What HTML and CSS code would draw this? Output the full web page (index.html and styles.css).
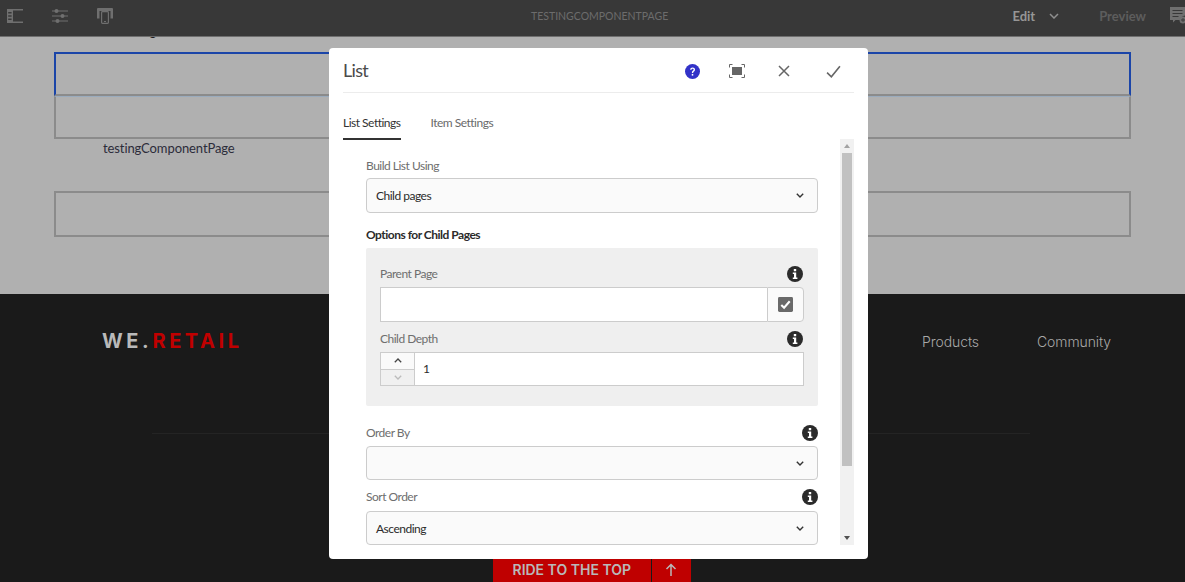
FILE: index.html
```html
<!DOCTYPE html>
<html lang="en">
<head>
  <meta charset="UTF-8" />
  <title>TESTINGCOMPONENTPAGE</title>
  <link rel="stylesheet" href="styles.css">
</head>
<body>
  <header class="topbar">
    <div class="topbar-tools">
      <svg class="tool" viewBox="0 0 16 14"><path d="M0 0h16v1.4H6V12.6h10V14H0z M1.2 3v1.4h3.4V3z M1.2 6.3v1.4h3.4V6.3z M1.2 9.600v1.400h3.400V9.600z" fill="#6f6f6f" fill-rule="evenodd"/></svg>
      <svg class="tool" viewBox="0 0 16 14"><g fill="#6f6f6f"><path d="M0 1.500h16v1H0zM0 6.500h16v1H0zM0 11.500h16v1H0z"/><circle cx="4.500" cy="2" r="2"/><circle cx="10.500" cy="7" r="2"/><circle cx="5.500" cy="12" r="2"/></g></svg>
      <svg class="tool" viewBox="0 0 16 16"><path d="M1 0h14a1 1 0 0 1 1 1v9.500h-2.500V3h-11v7.500H0V1a1 1 0 0 1 1-1z" fill="#6f6f6f"/><rect x="4.600" y="3.600" width="6.800" height="11.800" rx=".8" fill="none" stroke="#6f6f6f" stroke-width="1.200"/><path d="M7 13h2v1H7z" fill="#6f6f6f"/></svg>
    </div>
    <div class="topbar-title">TESTINGCOMPONENTPAGE</div>
    <div class="topbar-actions">
      <span class="mode">Edit</span>
      <svg class="mode-arrow" viewBox="0 0 10 6"><path d="M1 1l4 4 4-4" fill="none" stroke="#8f8f8f" stroke-width="1.500"/></svg>
      <span class="preview">Preview</span>
      <svg class="annotate" viewBox="0 0 16 17"><path d="M0 0h15v8.500a4.500 4.500 0 0 0-4 4.500H5.500L3 15.500V13H0z" fill="#6f6f6f"/><path d="M2.500 3h10v1h-10zM2.500 6h10v1h-10zM2.500 9h6v1h-6z" fill="#383838"/><circle cx="13" cy="13" r="3.500" fill="#6f6f6f"/><path d="M11 12.600h4v.8h-4zM12.600 11h.8v4h-.8z" fill="#383838"/></svg>
    </div>
  </header>

  <main class="page">
    <div class="page-heading">testing</div>
    <div class="parsys parsys-active"></div>
    <div class="parsys parsys-next"></div>
    <p class="page-link">testingComponentPage</p>
    <div class="parsys parsys-last"></div>
  </main>

  <footer class="footer">
    <div class="footer-nav">
      <div class="logo">WE.<span class="logo-red">RETAIL</span></div>
      <nav class="footer-links">
        <a>Products</a>
        <a>Community</a>
      </nav>
    </div>
    <div class="footer-rule"></div>
    <div class="ride">
      <span class="ride-label">RIDE TO THE TOP</span>
      <span class="ride-arrow">
        <svg viewBox="0 0 12 14" width="12" height="14"><path d="M6 13V1.500M1.500 6L6 1.500 10.500 6" fill="none" stroke="#b9b9b9" stroke-width="1.500"/></svg>
      </span>
    </div>
  </footer>

  <section class="dialog">
    <div class="dialog-head">
      <h2 class="dialog-title">List</h2>
      <div class="dialog-actions">
        <svg class="act act-help" viewBox="0 0 16 16"><circle cx="8" cy="8" r="8" fill="#3232c8"/><path d="M5.500 6.200c0-3.300 5.200-3.300 5.200-.2 0 1.800-2 1.800-2 3.500H7.300c0-2.400 1.900-2.400 1.900-3.400 0-1.300-2.200-1.200-2.200.1z" fill="#fff"/><rect x="7.200" y="10.600" width="1.600" height="1.800" fill="#fff"/></svg>
        <svg class="act" viewBox="0 0 16 14"><path d="M.5 3.500V.5h3M12.500.5h3v3M15.500 10.500v3h-3M3.500 13.500h-3v-3" fill="none" stroke="#666" stroke-width="1"/><rect x="3" y="3" width="10" height="8" fill="#666"/></svg>
        <svg class="act act-close" viewBox="0 0 14 14"><path d="M2 2l10 10M12 2L2 12" fill="none" stroke="#666" stroke-width="1.500"/></svg>
        <svg class="act act-small" viewBox="0 0 14 14"><path d="M1 8l4 4 8-10" fill="none" stroke="#666" stroke-width="1.500"/></svg>
      </div>
    </div>

    <div class="tabs">
      <span class="tab tab-on">List Settings</span>
      <span class="tab">Item Settings</span>
    </div>

    <div class="dialog-body">
      <form class="form">
        <div class="label-row"><label>Build List Using</label></div>
        <div class="select">Child pages<svg class="chev" viewBox="0 0 8 5"><path d="M.8.800L4 4 7.200.800" fill="none" stroke="#333" stroke-width="1.400"/></svg></div>

        <div class="group-title">Options for Child Pages</div>
        <div class="panel">
          <div class="label-row label-row-first">
            <label>Parent Page</label>
            <svg class="info" viewBox="0 0 16 16"><circle cx="8" cy="8" r="8" fill="#2b2b2b"/><path d="M6.800 3h2.400v2.200H6.800zM5.800 6.500h3.400v5h1.200V13H5.800v-1.500h1.200V8H5.800z" fill="#fff"/></svg>
          </div>
          <div class="pathfield">
            <div class="pathfield-input"></div>
            <div class="pathfield-btn">
              <svg viewBox="0 0 16 16" width="15" height="15"><rect width="16" height="16" rx="1.500" fill="#6a6a6a"/><path d="M3.500 8.500l3 3 6-7" fill="none" stroke="#fff" stroke-width="2.200"/></svg>
            </div>
          </div>
          <div class="label-row label-row-next">
            <label>Child Depth</label>
            <svg class="info" viewBox="0 0 16 16"><circle cx="8" cy="8" r="8" fill="#2b2b2b"/><path d="M6.800 3h2.400v2.200H6.800zM5.800 6.500h3.400v5h1.200V13H5.800v-1.500h1.200V8H5.800z" fill="#fff"/></svg>
          </div>
          <div class="number">
            <div class="stepper">
              <span class="step"><svg viewBox="0 0 8 5" width="8" height="5"><path d="M.8 4.200L4 1l3.200 3.200" fill="none" stroke="#444" stroke-width="1.300"/></svg></span>
              <span class="step step-off"><svg viewBox="0 0 8 5" width="8" height="5"><path d="M.8.800L4 4 7.200.800" fill="none" stroke="#bbb" stroke-width="1.300"/></svg></span>
            </div>
            <div class="number-value">1</div>
          </div>
        </div>

        <div class="label-row label-row-order">
          <label>Order By</label>
          <svg class="info" viewBox="0 0 16 16"><circle cx="8" cy="8" r="8" fill="#2b2b2b"/><path d="M6.800 3h2.400v2.200H6.800zM5.800 6.500h3.400v5h1.200V13H5.800v-1.500h1.200V8H5.800z" fill="#fff"/></svg>
        </div>
        <div class="select select-short"><svg class="chev" viewBox="0 0 8 5"><path d="M.8.800L4 4 7.200.800" fill="none" stroke="#333" stroke-width="1.400"/></svg></div>
        <div class="label-row label-row-next label-row-sort">
          <label>Sort Order</label>
          <svg class="info" viewBox="0 0 16 16"><circle cx="8" cy="8" r="8" fill="#2b2b2b"/><path d="M6.800 3h2.400v2.200H6.800zM5.800 6.500h3.400v5h1.200V13H5.800v-1.500h1.200V8H5.800z" fill="#fff"/></svg>
        </div>
        <div class="select select-short">Ascending<svg class="chev" viewBox="0 0 8 5"><path d="M.8.800L4 4 7.200.800" fill="none" stroke="#333" stroke-width="1.400"/></svg></div>
      </form>

      <div class="scrollbar">
        <span class="scroll-up"></span>
        <div class="scroll-track"><div class="scroll-thumb"></div></div>
        <span class="scroll-down"></span>
      </div>
    </div>
  </section>
</body>
</html>
```

FILE: styles.css
```css
html,
body {
  height: 100%;
}
body {
  margin: 0;
  height: 582px;
  overflow: hidden;
  background: #b0b0b0;
  font-family: "Lato", "Liberation Sans", sans-serif;
  color: #2b2b2b;
}

/* top bar */
.topbar {
  position: relative;
  z-index: 2;
  display: flex;
  align-items: center;
  height: 36px;
  box-sizing: content-box;
  background: #383838;
  border-bottom: 1px solid #6f6f6f;
}
.topbar-tools {
  display: flex;
  align-items: center;
  gap: 29px;
  padding: 0 0 5px 7px;
  width: 531px;
  box-sizing: border-box;
}
.tool {
  width: 16px;
  height: 16px;
}
.topbar-title {
  flex: 1;
  padding-bottom: 5px;
  font-size: 10.5px;
  color: #6c6c6c;
}
.topbar-actions {
  display: flex;
  align-items: center;
  padding-bottom: 5px;
  margin-right: -1px;
}
.mode {
  font-size: 13px;
  font-weight: 700;
  color: #969696;
}
.mode-arrow {
  width: 10px;
  height: 6px;
  margin-left: 14px;
}
.preview {
  margin-left: 40px;
  font-size: 13px;
  font-weight: 700;
  color: #5d5d5d;
}
.annotate {
  width: 16px;
  height: 17px;
  margin-left: 24px;
}

/* page under the dialog */
.page {
  height: 257px;
  box-sizing: border-box;
  padding: 15px 54px 0;
}
.page-heading {
  height: 0;
  margin: -30px 0 30px 63px;
  font-size: 13px;
  line-height: 18px;
  color: #1c1c1c;
}
.parsys {
  border: 2px solid #8b8b8b;
  box-sizing: border-box;
}
.parsys-active {
  height: 44px;
  border-color: #1b45a8;
  border-bottom-color: #8b8b8b;
}
.parsys-next {
  height: 43px;
  border-top-color: #9aabbd;
  border-top-width: 1px;
}
.page-link {
  margin: 1px 0 0 49px;
  height: 51px;
  font-size: 13px;
  line-height: 16px;
  letter-spacing: -0.1px;
  color: #2c2c3a;
}
.parsys-last {
  height: 46px;
}

/* footer */
.footer {
  display: flex;
  flex-direction: column;
  height: 288px;
  background: #1a1a1a;
}
.footer-nav {
  display: flex;
  justify-content: space-between;
  align-items: center;
  height: 30px;
  margin-top: 32px;
  padding: 0 74px 0 102px;
}
.logo {
  font-family: "Inter", "Liberation Sans", sans-serif;
  font-size: 20px;
  font-weight: 700;
  letter-spacing: 3.6px;
  color: #b9b9b9;
}
.logo-red {
  color: #c00000;
}
.footer-links {
  display: flex;
  gap: 58px;
  font-family: "Inter", "Liberation Sans", sans-serif;
  font-size: 14px;
  font-weight: 300;
  letter-spacing: -0.1px;
  color: #a8a8a8;
}
.footer-rule {
  height: 1px;
  margin: 77px 155px 0 152px;
  background: #242424;
}
.ride {
  display: flex;
  align-self: center;
  width: 198px;
  height: 24px;
  margin: auto 2px 0 0;
  background: #bf0000;
  color: #b9b9b9;
  font-family: "Inter", "Liberation Sans", sans-serif;
  font-size: 14px;
  font-weight: 600;
}
.ride-label {
  flex: 1;
  padding-left: 20px;
  line-height: 23px;
}
.ride-arrow {
  display: flex;
  align-items: center;
  justify-content: center;
  width: 39px;
  border-left: 1px solid #1a1a1a;
}

/* dialog */
.dialog {
  position: absolute;
  left: 329px;
  top: 48px;
  width: 539px;
  height: 511px;
  box-sizing: border-box;
  padding: 0 14px;
  background: #fff;
  border-radius: 4px;
}
.dialog-head {
  display: flex;
  justify-content: space-between;
  align-items: center;
  height: 45px;
  box-sizing: border-box;
  padding-top: 2px;
  border-bottom: 1px solid #ececec;
}
.dialog-title {
  margin: 0;
  padding-bottom: 2px;
  font-size: 18px;
  font-weight: 400;
  letter-spacing: -0.7px;
  color: #4b4b4b;
}
.dialog-actions {
  display: flex;
  align-items: center;
  gap: 32px;
  padding-right: 13px;
}
.act {
  width: 16px;
  height: 16px;
}
.act-help {
  width: 15px;
  height: 15px;
  margin-right: -3px;
}
.act-close {
  margin-right: 1px;
  width: 14px;
  height: 14px;
}
.act-small {
  margin-left: 2px;
  width: 15px;
  height: 15px;
}
.tabs {
  display: flex;
  gap: 30px;
  height: 46px;
}
.tab {
  height: 47px;
  box-sizing: border-box;
  padding-top: 22px;
  font-size: 12px;
  line-height: 16px;
  letter-spacing: -0.5px;
  color: #6a6a6a;
}
.tab-on {
  color: #323232;
  border-bottom: 2px solid #323232;
}
.dialog-body {
  display: flex;
  height: 406px;
}
.form {
  flex: 1;
  padding: 18px 22px 0 23px;
  overflow: hidden;
  font-size: 12px;
  letter-spacing: -0.5px;
}
.label-row {
  display: flex;
  justify-content: space-between;
  align-items: center;
  height: 18px;
  margin-bottom: 3px;
  color: #6e6e6e;
}
.label-row label {
  padding-bottom: 2px;
}
.info {
  width: 16px;
  height: 16px;
}
.select {
  display: flex;
  justify-content: space-between;
  align-items: center;
  height: 35px;
  box-sizing: border-box;
  padding: 0 13px 0 9px;
  background: #fafafa;
  border: 1px solid #ccc;
  border-radius: 4px;
  color: #2b2b2b;
}
.select-short {
  height: 34px;
  justify-content: flex-end;
}
.select-short:last-child {
  justify-content: space-between;
}
.chev {
  width: 8px;
  height: 5px;
}
.group-title {
  height: 18px;
  margin: 13px 0 4px;
  line-height: 18px;
  font-weight: 700;
  color: #2b2b2b;
}
.panel {
  height: 158px;
  box-sizing: border-box;
  padding: 17px 14px 0;
  background: #efefef;
  border-radius: 2px;
}
.panel .label-row {
  margin-bottom: 4px;
  padding-right: 1px;
}
.label-row-next {
  margin-top: 8px;
}
.label-row-order {
  margin-top: 18px;
  margin-bottom: 4px;
}
.label-row-sort {
  margin-bottom: 5px;
}
.pathfield {
  display: flex;
  height: 35px;
}
.pathfield-input {
  flex: 1;
  background: #fff;
  border: 1px solid #ccc;
  border-right: 0;
}
.pathfield-btn {
  display: flex;
  align-items: center;
  justify-content: center;
  width: 37px;
  box-sizing: border-box;
  background: #fafafa;
  border: 1px solid #ccc;
  border-radius: 0 4px 4px 0;
}
.number {
  display: flex;
  height: 34px;
  border: 1px solid #ccc;
  box-sizing: border-box;
  background: #fff;
}
.stepper {
  display: flex;
  flex-direction: column;
  width: 33px;
  border-right: 1px solid #ccc;
}
.step {
  display: flex;
  flex: 1;
  align-items: center;
  justify-content: center;
  background: #fafafa;
}
.step-off {
  background: #f0f0f0;
  border-top: 1px solid #ccc;
}
.number-value {
  padding-left: 8px;
  line-height: 32px;
  color: #2b2b2b;
}

/* scrollbar */
.scrollbar {
  display: flex;
  flex-direction: column;
  align-items: center;
  width: 14px;
  background: #f1f1f1;
}
.scroll-up,
.scroll-down {
  flex: none;
  width: 0;
  height: 0;
  border-left: 3.500px solid transparent;
  border-right: 3.500px solid transparent;
}
.scroll-up {
  margin: 5px 0 5px;
  border-bottom: 4px solid #a3a3a3;
}
.scroll-down {
  margin: 3px 0 5px;
  border-top: 4px solid #505050;
}
.scroll-track {
  flex: 1;
  width: 10px;
}
.scroll-thumb {
  height: 313px;
  background: #c1c1c1;
}
```
